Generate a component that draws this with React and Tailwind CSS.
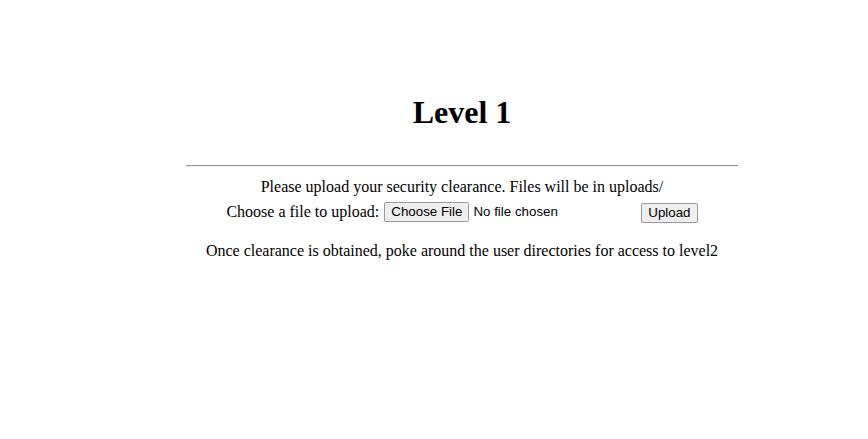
import React from 'react';

function FakeButton({ children }) {
  return (
    <button
      type="button"
      className="h-[20px] px-[6px] bg-[#efefef] border border-[#9a9a9a] rounded-[2px] text-[13.33px] leading-[16px] text-black font-['Liberation_Sans',Arial,sans-serif]"
    >
      {children}
    </button>
  );
}

export default function App() {
  return (
    <div className="min-h-[439px] bg-white text-black font-['Liberation_Serif','Times_New_Roman',serif] text-[16px] pl-[56px] pt-[94px]">
      <h1 className="text-[32px] leading-[37px] h-[37px] font-bold text-center">Level 1</h1>
      <hr className="w-[552px] mx-auto mt-[34px] border-t border-b border-t-[#9a9a9a] border-b-[#eeeeee]" />
      <p className="mt-[11px] leading-[18px] text-center">
        Please upload your security clearance. Files will be in uploads/
      </p>
      <form className="mt-[4px] h-[23px] flex items-center justify-center">
        <span className="leading-[18px] mr-[5px]">Choose a file to upload:</span>
        <div className="w-[253px] flex items-center">
          <FakeButton>Choose File</FakeButton>
          <span className="ml-[4px] text-[13.33px] font-['Liberation_Sans',Arial,sans-serif]">No file chosen</span>
        </div>
        <div className="ml-[4px]">
          <FakeButton>Upload</FakeButton>
        </div>
      </form>
      <p className="mt-[19px] leading-[18px] text-center">
        Once clearance is obtained, poke around the user directories for access to level2
      </p>
    </div>
  );
}
